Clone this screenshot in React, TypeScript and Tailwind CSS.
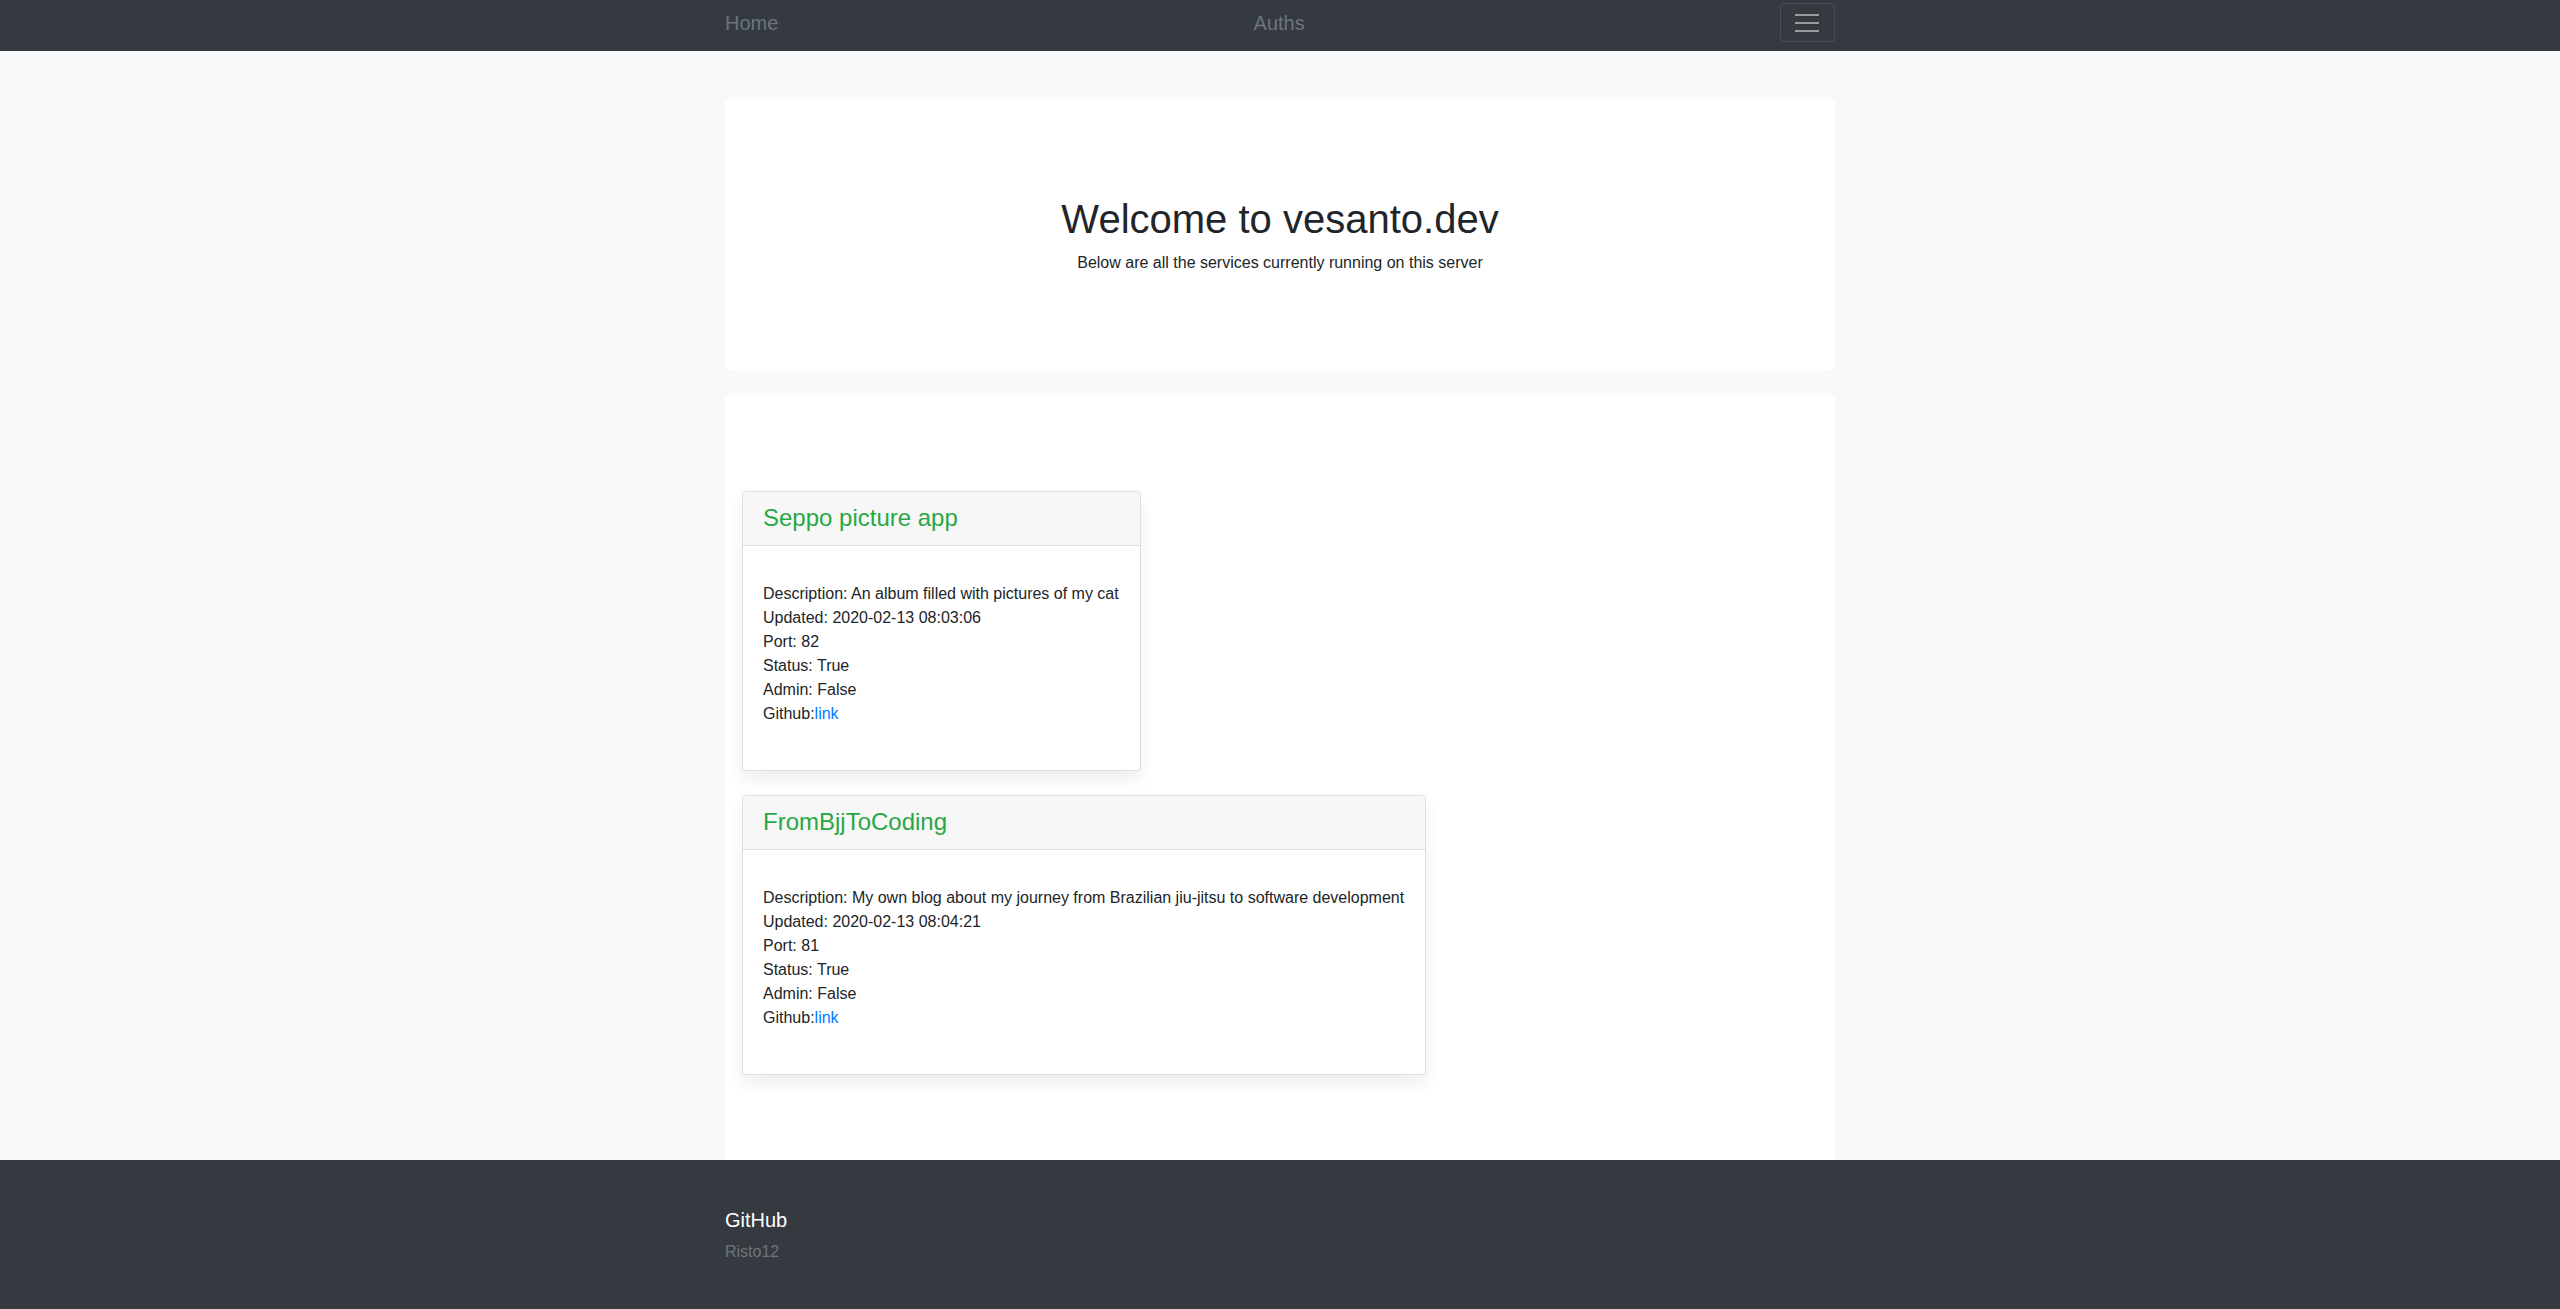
import React from "react";

type Service = {
  name: string;
  description: string;
  updated: string;
  port: number;
};

const services: Service[] = [
  {
    name: "Seppo picture app",
    description: "An album filled with pictures of my cat",
    updated: "2020-02-13 08:03:06",
    port: 82,
  },
  {
    name: "FromBjjToCoding",
    description: "My own blog about my journey from Brazilian jiu-jitsu to software development",
    updated: "2020-02-13 08:04:21",
    port: 81,
  },
];

function Card({ s }: { s: Service }) {
  return (
    <div className="w-fit border border-[#dfdfdf] rounded-[4px] bg-white shadow-[0_0.5rem_1rem_rgba(0,0,0,0.07)] overflow-hidden">
      <div className="h-[54px] px-5 flex items-center bg-[#f7f7f7] border-b border-[#dfdfdf]">
        <h4 className="text-[24px] leading-[1.2] text-[#28a745] m-0 font-normal">{s.name}</h4>
      </div>
      <div className="pl-5 pr-[21px] pt-[36px] pb-[44px] text-[16px] leading-[24px] text-[#212529] whitespace-nowrap">
        <div>Description: {s.description}</div>
        <div>Updated: {s.updated}</div>
        <div>Port: {s.port}</div>
        <div>Status: True</div>
        <div>Admin: False</div>
        <div>
          Github:<a className="text-[#007bff]">link</a>
        </div>
      </div>
    </div>
  );
}

export default function App() {
  return (
    <div
      className="min-h-[1309px] bg-[#f8f9fa] flex flex-col text-[#212529]"
      style={{ fontFamily: '"Liberation Sans", Arial, sans-serif' }}
    >
      <nav className="h-[51px] bg-[#343a40]">
        <div className="w-[1110px] mx-auto pt-[3px] h-[42px] flex items-center justify-between">
          <a className="text-[20px] leading-[30px] text-[#6c757d]">Home</a>
          <a className="text-[20px] leading-[30px] text-[#6c757d]">Auths</a>
          <button className="w-[55px] h-[39px] border border-[rgba(255,255,255,0.1)] rounded-[4px] flex flex-col items-center justify-center gap-[6px]">
            <span className="block w-[24px] h-[2px] bg-[#9a9da0]" />
            <span className="block w-[24px] h-[2px] bg-[#9a9da0]" />
            <span className="block w-[24px] h-[2px] bg-[#9a9da0]" />
          </button>
        </div>
      </nav>

      <main className="w-[1110px] mx-auto flex flex-col">
        <section className="mt-[48px] mb-[24px] h-[272px] bg-white rounded-[5px] pt-[96px] flex flex-col items-center">
          <h1 className="text-[40px] leading-[48px] font-normal m-0">Welcome to vesanto.dev</h1>
          <p className="mt-[8px] text-[16px] leading-[24px]">Below are all the services currently running on this server</p>
        </section>

        <section className="bg-white rounded-t-[5px] pt-[96px] pb-[85px] pl-[17px] flex flex-col gap-[24px]">
          {services.map((s) => (
            <Card key={s.name} s={s} />
          ))}
        </section>
      </main>

      <footer className="bg-[#343a40] pt-[48px] pb-[45px]">
        <div className="w-[1110px] mx-auto">
          <h5 className="text-[20px] leading-[24px] text-white mb-[8px]">GitHub</h5>
          <p className="text-[16px] leading-[24px] text-[#6c757d]">Risto12</p>
        </div>
      </footer>
    </div>
  );
}
